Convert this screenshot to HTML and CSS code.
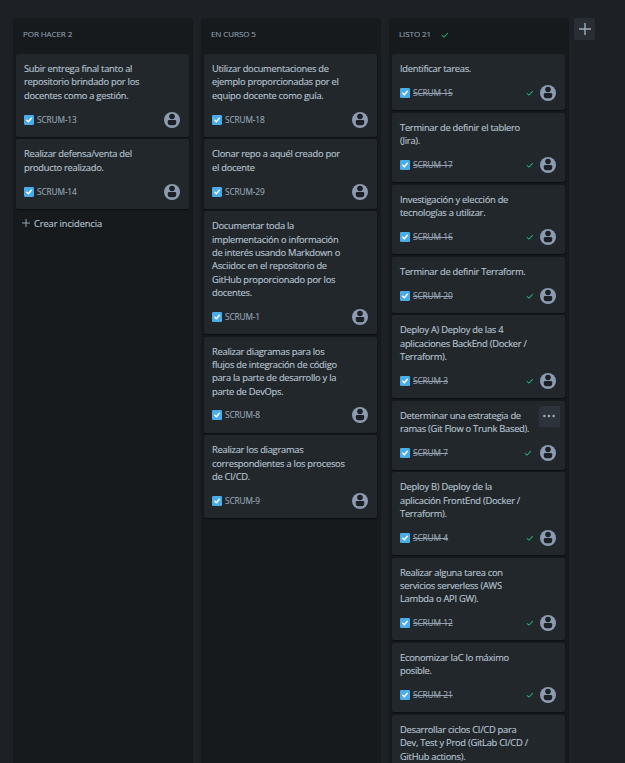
FILE: index.html
```html
<!DOCTYPE html>
<html lang="es">
<head>
<meta charset="utf-8">
<title>Tablero SCRUM</title>
<link rel="stylesheet" href="styles.css">
</head>
<body>
<svg class="defs" aria-hidden="true">
  <symbol id="task" viewBox="0 0 10 10"><rect width="10" height="10" rx="1.2" fill="#4bade8"/><path d="M2.8 5.2 4.4 6.8 7.3 3.3" fill="none" stroke="#fff" stroke-width="1.4" stroke-linecap="round" stroke-linejoin="round"/></symbol>
  <symbol id="user" viewBox="0 0 16 16"><circle cx="8" cy="8" r="8" fill="#8c9bb0"/><circle cx="8" cy="4.5" r="2.8" fill="#1d2125"/><path d="M3.8 9.2Q3.8 7.9 5.1 7.9H10.9Q12.2 7.9 12.2 9.2V10.6Q12.2 13.2 9.6 13.2H6.4Q3.8 13.2 3.8 10.6Z" fill="#1d2125"/></symbol>
  <symbol id="done" viewBox="0 0 8 8"><path d="M1.2 4.6 3 6.2 6.6 2.4" fill="none" stroke="#22a56c" stroke-width="1.05" stroke-linecap="round" stroke-linejoin="round"/></symbol>
</svg>
<main class="board">
  <section class="column">
    <h2 class="column-title">POR HACER 2</h2>
    <article class="card"><p>Subir entrega final tanto al<br>repositorio brindado por los<br>docentes como a gestión.</p><footer><svg class="task"><use href="#task"/></svg><span class="key">SCRUM-13</span><svg class="user"><use href="#user"/></svg></footer></article>
    <article class="card"><p>Realizar defensa/venta del<br>producto realizado.</p><footer><svg class="task"><use href="#task"/></svg><span class="key">SCRUM-14</span><svg class="user"><use href="#user"/></svg></footer></article>
    <button class="create"><svg viewBox="0 0 8 8"><path d="M4 0V8M0 4H8" stroke="#9fadbc" stroke-width=".9"/></svg><span>Crear incidencia</span></button>
  </section>
  <section class="column">
    <h2 class="column-title">EN CURSO 5</h2>
    <article class="card"><p>Utilizar documentaciones de<br>ejemplo proporcionadas por el<br>equipo docente como guía.</p><footer><svg class="task"><use href="#task"/></svg><span class="key">SCRUM-18</span><svg class="user"><use href="#user"/></svg></footer></article>
    <article class="card"><p>Clonar repo a aquél creado por<br>el docente</p><footer><svg class="task"><use href="#task"/></svg><span class="key">SCRUM-29</span><svg class="user"><use href="#user"/></svg></footer></article>
    <article class="card"><p>Documentar toda la<br>implementación o información<br>de interés usando Markdown o<br>Asciidoc en el repositorio de<br>GitHub proporcionado por los<br>docentes.</p><footer><svg class="task"><use href="#task"/></svg><span class="key">SCRUM-1</span><svg class="user"><use href="#user"/></svg></footer></article>
    <article class="card"><p>Realizar diagramas para los<br>flujos de integración de código<br>para la parte de desarrollo y la<br>parte de DevOps.</p><footer><svg class="task"><use href="#task"/></svg><span class="key">SCRUM-8</span><svg class="user"><use href="#user"/></svg></footer></article>
    <article class="card"><p>Realizar los diagramas<br>correspondientes a los procesos<br>de CI/CD.</p><footer><svg class="task"><use href="#task"/></svg><span class="key">SCRUM-9</span><svg class="user"><use href="#user"/></svg></footer></article>
  </section>
  <section class="column finished">
    <h2 class="column-title">LISTO 21<svg class="done"><use href="#done"/></svg></h2>
    <article class="card"><p>Identificar tareas.</p><footer><svg class="task"><use href="#task"/></svg><span class="key">SCRUM-15</span><svg class="done"><use href="#done"/></svg><svg class="user"><use href="#user"/></svg></footer></article>
    <article class="card"><p>Terminar de definir el tablero<br>(Jira).</p><footer><svg class="task"><use href="#task"/></svg><span class="key">SCRUM-17</span><svg class="done"><use href="#done"/></svg><svg class="user"><use href="#user"/></svg></footer></article>
    <article class="card"><p>Investigación y elección de<br>tecnologías a utilizar.</p><footer><svg class="task"><use href="#task"/></svg><span class="key">SCRUM-16</span><svg class="done"><use href="#done"/></svg><svg class="user"><use href="#user"/></svg></footer></article>
    <article class="card"><p>Terminar de definir Terraform.</p><footer><svg class="task"><use href="#task"/></svg><span class="key">SCRUM-20</span><svg class="done"><use href="#done"/></svg><svg class="user"><use href="#user"/></svg></footer></article>
    <article class="card"><p>Deploy A) Deploy de las 4<br>aplicaciones BackEnd (Docker /<br>Terraform).</p><footer><svg class="task"><use href="#task"/></svg><span class="key">SCRUM-3</span><svg class="done"><use href="#done"/></svg><svg class="user"><use href="#user"/></svg></footer></article>
    <article class="card active"><p>Determinar una estrategia de<br>ramas (Git Flow o Trunk Based).</p><button class="more"><svg viewBox="0 0 12 4"><circle cx="1.4" cy="2" r="1.25"/><circle cx="6" cy="2" r="1.25"/><circle cx="10.6" cy="2" r="1.25"/></svg></button><footer><svg class="task"><use href="#task"/></svg><span class="key">SCRUM-7</span><svg class="done"><use href="#done"/></svg><svg class="user"><use href="#user"/></svg></footer></article>
    <article class="card"><p>Deploy B) Deploy de la<br>aplicación FrontEnd (Docker /<br>Terraform).</p><footer><svg class="task"><use href="#task"/></svg><span class="key">SCRUM-4</span><svg class="done"><use href="#done"/></svg><svg class="user"><use href="#user"/></svg></footer></article>
    <article class="card"><p>Realizar alguna tarea con<br>servicios serverless (AWS<br>Lambda o API GW).</p><footer><svg class="task"><use href="#task"/></svg><span class="key">SCRUM-12</span><svg class="done"><use href="#done"/></svg><svg class="user"><use href="#user"/></svg></footer></article>
    <article class="card"><p>Economizar IaC lo máximo<br>posible.</p><footer><svg class="task"><use href="#task"/></svg><span class="key">SCRUM-21</span><svg class="done"><use href="#done"/></svg><svg class="user"><use href="#user"/></svg></footer></article>
    <article class="card"><p>Desarrollar ciclos CI/CD para<br>Dev, Test y Prod (GitLab CI/CD /<br>GitHub actions).</p></article>
  </section>
  <button class="add"><svg viewBox="0 0 12 12"><path d="M6 0V12M0 6H12" stroke="#9fadbc" stroke-width="1.4"/></svg></button>
</main>
</body>
</html>
```
FILE: styles.css
```css
* { box-sizing: border-box; }
body {
  margin: 0;
  height: 763px;
  overflow: hidden;
  background: #1d2125;
  color: #b6c2cf;
  font-family: "Open Sans", "Noto Sans", sans-serif;
  font-size: 9.33px;
  -webkit-text-stroke: .15px currentColor;
}
button { border: 0; padding: 0; font: inherit; color: inherit; background: none; }
svg { display: block; flex: none; }
.defs { position: absolute; width: 0; height: 0; }
.board { display: flex; gap: 8px; height: 763px; padding: 18px 0 0 13px; overflow: hidden; }
.column {
  flex: none;
  width: 180px;
  padding: 0 4px 0 3px;
  background: #161a1d;
  border-radius: 4px 4px 0 0;
}
.column-title {
  display: flex;
  align-items: center;
  height: 36px;
  margin: 0;
  padding: 0 0 5px 7px;
  color: #8c9bab;
  font-size: 8px;
  font-weight: 500;
  letter-spacing: -.08px;
}
.column-title .done { margin: 2px 0 0 10px; }
.card {
  position: relative;
  margin-bottom: 2.667px;
  padding: 8px 9px 9.067px 8px;
  background: #22272b;
  border-radius: 2px;
  box-shadow: 0 1px 1px #0d1013;
}
.card p { margin: 0; line-height: 13.333px; letter-spacing: -.26px; white-space: nowrap; }
.card footer { display: flex; align-items: center; height: 16px; margin-top: 9.6px; }
.task { width: 10px; height: 10px; margin: 0 3px 0 0; }
.key { color: #94a2b1; font-size: 8.3px; font-weight: 500; line-height: 12px; letter-spacing: -.12px; }
.user { width: 16px; height: 16px; margin-left: auto; }
.done { width: 8px; height: 8px; }
.finished .key { text-decoration: line-through; }
.finished footer .done { margin-left: auto; }
.finished footer .user { margin-left: 6px; }
.active footer .user { margin-left: 8px; }
.more {
  position: absolute;
  top: 5px;
  right: 5px;
  display: grid;
  place-items: center;
  width: 21px;
  height: 21px;
  background: #2c333a;
  border-radius: 2px;
}
.more svg { width: 12px; height: 4px; margin-right: 1px; fill: #9fadbc; }
.create { display: flex; align-items: center; gap: 4px; height: 24px; padding-left: 6px; letter-spacing: -.12px; }
.create svg { width: 8px; height: 8px; }
.add {
  display: grid;
  place-items: center;
  width: 21px;
  height: 22px;
  margin-left: -3px;
  background: #282e33;
  border-radius: 2px;
}
.add svg { width: 12px; height: 12px; }
```
